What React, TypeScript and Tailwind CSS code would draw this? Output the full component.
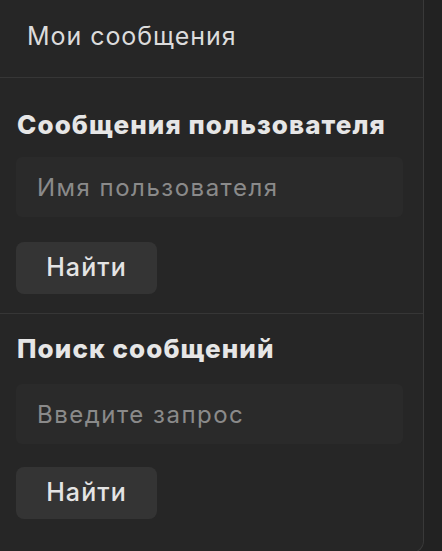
export default function App() {
  const font = { fontFamily: 'Inter, "Noto Sans", sans-serif' };

  const Section = ({ title, placeholder, first }: { title: string; placeholder: string; first?: boolean }) => (
    <div className={`flex flex-col px-4 ${first ? 'pt-[29px] pb-[19px] border-b border-[#363636]' : 'pt-[17px] pb-[26px]'}`}>
      <h2 className="text-[26px] leading-[36px] font-extrabold tracking-[1.1px] text-[#e6e6e6] pl-[1px]">{title}</h2>
      <input
        className={`${first ? 'mt-[14px]' : 'mt-[17px]'} h-[60px] w-[387px] rounded-[6px] bg-[#2a2a2a] px-[21px] text-[24px] tracking-[1.5px] text-[#e0e0e0] placeholder-[#8a8a8a] outline-none`}
        placeholder={placeholder}
        style={font}
      />
      <button
        className={`${first ? 'mt-[25px]' : 'mt-[23px]'} h-[52px] w-[141px] rounded-[8px] bg-[#343434] text-[25px] font-medium tracking-[1.1px] text-[#e4e4e4]`}
        style={font}
      >
        Найти
      </button>
    </div>
  );

  return (
    <div className="w-[442px] h-[551px] overflow-hidden bg-[#222222]" style={font}>
      <div className="w-[424px] h-[553px] bg-[#262626] border-r border-b border-[#393939] rounded-br-[12px]">
        <div className="h-[78px] flex items-center px-[27px] pb-[3px] border-b border-[#363636]">
          <span className="text-[25px] tracking-[0.95px] text-[#dcdcdc]">Мои сообщения</span>
        </div>
        <Section title="Сообщения пользователя" placeholder="Имя пользователя" first />
        <Section title="Поиск сообщений" placeholder="Введите запрос" />
      </div>
    </div>
  );
}
